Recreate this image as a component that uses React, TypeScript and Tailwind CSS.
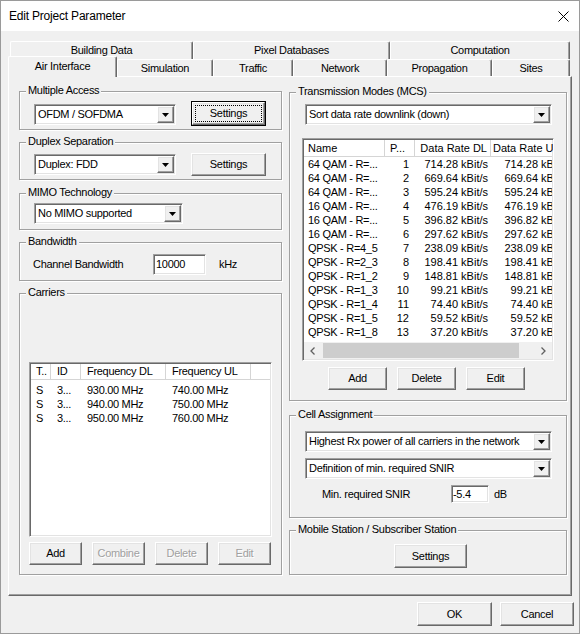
import type { ReactNode } from "react";

const sunken =
  "border border-t-[#a0a0a0] border-l-[#a0a0a0] border-r-white border-b-white shadow-[inset_1px_1px_0_#696969,inset_-1px_-1px_0_#e3e3e3] bg-white p-px";
const raised =
  "border border-t-white border-l-white border-r-[#696969] border-b-[#696969] shadow-[inset_-1px_-1px_0_#a0a0a0,inset_1px_1px_0_#e3e3e3] bg-[#f0f0f0]";

function Arrow() {
  return (
    <svg width="7" height="4" viewBox="0 0 7 4">
      <path d="M0 0h7L3.5 4z" fill="#000" />
    </svg>
  );
}

function Combo({ value, className }: { value: string; className: string }) {
  return (
    <div className={`${sunken} flex items-stretch ${className}`}>
      <span className="flex flex-1 items-center overflow-hidden whitespace-nowrap pl-[2px]">{value}</span>
      <span className={`${raised} flex w-[17px] items-center justify-center`}>
        <Arrow />
      </span>
    </div>
  );
}

function Button({
  children,
  className,
  disabled,
  focused,
}: {
  children: ReactNode;
  className: string;
  disabled?: boolean;
  focused?: boolean;
}) {
  const text = disabled ? "text-[#a0a0a0] [text-shadow:1px_1px_0_#fff]" : "text-black";
  if (focused) {
    return (
      <div className={`flex border border-black ${className}`}>
        <div className={`${raised} flex flex-1 p-[2px]`}>
          <div className={`flex flex-1 items-center justify-center border border-dotted border-black ${text}`}>
            {children}
          </div>
        </div>
      </div>
    );
  }
  return <div className={`${raised} flex items-center justify-center ${text} ${className}`}>{children}</div>;
}

function Group({ title, className, children }: { title: string; className: string; children?: ReactNode }) {
  return (
    <div className={`relative border border-[#a0a0a0] shadow-[inset_1px_1px_0_#fff,1px_1px_0_#fff] ${className}`}>
      <span className="absolute -top-[8px] left-[6px] bg-[#f0f0f0] px-[2px] leading-[13px] whitespace-nowrap">
        {title}
      </span>
      {children}
    </div>
  );
}

const tab =
  "flex items-center justify-center border-t border-l border-r border-t-white border-l-white border-r-[#696969] shadow-[inset_-1px_0_0_#a0a0a0] rounded-t-[2px]";

const mcs: [string, number, string][] = [
  ["64 QAM - R=...", 1, "714.28"],
  ["64 QAM - R=...", 2, "669.64"],
  ["64 QAM - R=...", 3, "595.24"],
  ["16 QAM - R=...", 4, "476.19"],
  ["16 QAM - R=...", 5, "396.82"],
  ["16 QAM - R=...", 6, "297.62"],
  ["QPSK - R=4_5", 7, "238.09"],
  ["QPSK - R=2_3", 8, "198.41"],
  ["QPSK - R=1_2", 9, "148.81"],
  ["QPSK - R=1_3", 10, "99.21"],
  ["QPSK - R=1_4", 11, "74.40"],
  ["QPSK - R=1_5", 12, "59.52"],
  ["QPSK - R=1_8", 13, "37.20"],
];

const carriers = [
  ["930.00 MHz", "740.00 MHz"],
  ["940.00 MHz", "750.00 MHz"],
  ["950.00 MHz", "760.00 MHz"],
];

const head = "flex h-full items-center border-r border-[#d5d5d5] whitespace-nowrap overflow-hidden";

export default function App() {
  return (
    <div className="flex h-[634px] w-[580px] flex-col border border-[#9a9a9a] bg-[#f0f0f0] font-['Liberation_Sans',Arial,sans-serif] text-[11px] leading-[13px] tracking-[-0.3px] text-black">
      {/* title bar */}
      <div className="flex h-[30px] items-center justify-between bg-white pl-[8px] pr-[10px]">
        <span className="text-[12px] tracking-[-0.2px]">Edit Project Parameter</span>
        <svg width="11" height="11" viewBox="0 0 11 11">
          <path d="M0.5 0.5l10 10M10.5 0.5l-10 10" stroke="#000" strokeWidth="1" />
        </svg>
      </div>

      <div className="pt-[10px]">
        {/* tabs, back row */}
        <div className="ml-[9px] flex h-[18px]">
          <div className={`${tab} w-[183px]`}>Building Data</div>
          <div className={`${tab} w-[197px]`}>Pixel Databases</div>
          <div className={`${tab} w-[180px]`}>Computation</div>
        </div>
        {/* tabs, front row */}
        <div className="ml-[7px] flex h-[17px] items-end">
          <div className="relative z-10 -mb-px flex h-[21px] w-[109px] items-start justify-center rounded-t-[2px] border-t border-r border-l border-t-white border-r-[#696969] border-l-white bg-[#f0f0f0] pt-[3px] shadow-[inset_-1px_0_0_#a0a0a0]">
            Air Interface
          </div>
          <div className={`${tab} h-full w-[96px]`}>Simulation</div>
          <div className={`${tab} h-full w-[80px]`}>Traffic</div>
          <div className={`${tab} h-full w-[94px]`}>Network</div>
          <div className={`${tab} h-full w-[105px]`}>Propagation</div>
          <div className={`${tab} h-full w-[78px]`}>Sites</div>
        </div>

        {/* panel */}
        <div className="ml-[7px] flex h-[520px] w-[564px] gap-[7px] border border-t-white border-r-[#696969] border-b-[#696969] border-l-white pt-[14px] pl-[10px] shadow-[inset_-1px_-1px_0_#a0a0a0]">
          {/* left column */}
          <div className="flex w-[263px] flex-col">
            <Group title="Multiple Access" className="flex h-[39px] items-start">
              <Combo value="OFDM / SOFDMA" className="mt-[12px] ml-[14px] h-[21px] w-[142px]" />
              <Button focused className="mt-[9px] ml-[15px] h-[25px] w-[75px]">
                Settings
              </Button>
            </Group>
            <Group title="Duplex Separation" className="mt-[12px] flex h-[38px] items-start">
              <Combo value="Duplex: FDD" className="mt-[11px] ml-[14px] h-[21px] w-[142px]" />
              <Button className="mt-[10px] ml-[15px] h-[23px] w-[75px]">Settings</Button>
            </Group>
            <Group title="MIMO Technology" className="mt-[13px] flex h-[37px] items-start">
              <Combo value="No MIMO supported" className="mt-[9px] ml-[14px] h-[21px] w-[149px]" />
            </Group>
            <Group title="Bandwidth" className="mt-[12px] h-[39px]">
              <div className="mt-[11px] flex h-[21px] items-center">
                <span className="ml-[13px] w-[120px]">Channel Bandwidth</span>
                <div className={`${sunken} flex h-[21px] w-[53px] items-center pl-[2px]`}>10000</div>
                <span className="ml-[13px]">kHz</span>
              </div>
            </Group>
            <Group title="Carriers" className="mt-[12px] h-[282px]">
              <div className={`${sunken} mt-[68px] ml-[9px] flex h-[175px] w-[243px] flex-col`}>
                <div className="flex h-[16px] shrink-0 border-b border-[#d5d5d5]">
                  <div className={`${head} w-[20px] pl-[5px]`}>T..</div>
                  <div className={`${head} w-[30px] pl-[6px]`}>ID</div>
                  <div className={`${head} w-[85px] pl-[6px]`}>Frequency DL</div>
                  <div className={`${head} w-[85px] pl-[6px]`}>Frequency UL</div>
                </div>
                <div className="pt-[3px]">
                  {carriers.map(([dl, ul]) => (
                    <div key={dl} className="flex h-[14px] items-center whitespace-nowrap">
                      <span className="w-[20px] pl-[5px]">S</span>
                      <span className="w-[30px] pl-[6px]">3...</span>
                      <span className="w-[85px] pl-[6px]">{dl}</span>
                      <span className="w-[85px] pl-[6px]">{ul}</span>
                    </div>
                  ))}
                </div>
              </div>
              <div className="mt-[5px] ml-[9px] flex gap-[10px]">
                <Button className="h-[23px] w-[53px]">Add</Button>
                <Button disabled className="h-[23px] w-[53px]">
                  Combine
                </Button>
                <Button disabled className="h-[23px] w-[53px]">
                  Delete
                </Button>
                <Button disabled className="h-[23px] w-[53px]">
                  Edit
                </Button>
              </div>
            </Group>
          </div>

          {/* right column */}
          <div className="mt-px flex w-[278px] flex-col">
            <Group title="Transmission Modes (MCS)" className="h-[309px]">
              <Combo value="Sort data rate downlink (down)" className="mt-[11px] ml-[15px] h-[21px] w-[247px]" />
              <div
                className={`${sunken} mt-[13px] ml-[12px] flex h-[223px] w-[252px] flex-col overflow-hidden tracking-normal`}
              >
                <div className="flex h-[17px] shrink-0 border-b border-[#d5d5d5]">
                  <div className={`${head} w-[81px] shrink-0 pl-[4px]`}>Name</div>
                  <div className={`${head} w-[30px] shrink-0 pl-[5px]`}>P...</div>
                  <div className={`${head} w-[76px] shrink-0 justify-end pr-[3px]`}>Data Rate DL</div>
                  <div className={`${head} w-[80px] shrink-0 pl-[2px]`}>Data Rate UL</div>
                </div>
                <div className="flex-1 overflow-hidden">
                  {mcs.map(([name, p, rate]) => (
                    <div key={p} className="flex h-[14px] items-center whitespace-nowrap">
                      <span className="w-[81px] shrink-0 overflow-hidden pl-[4px] tracking-[-0.3px]">{name}</span>
                      <span className="w-[30px] shrink-0 pr-[6px] text-right">{p}</span>
                      <span className="w-[76px] shrink-0 pr-[3px] text-right">{rate} kBit/s</span>
                      <span className="w-[80px] shrink-0 pr-[3px] text-right">{rate} kBit/s</span>
                    </div>
                  ))}
                </div>
                <div className="flex h-[17px] shrink-0 items-stretch bg-[#f0f0f0]">
                  <span className="flex w-[17px] items-center justify-center">
                    <svg width="5" height="8" viewBox="0 0 5 8">
                      <path d="M4.5 0.5L1 4l3.5 3.5" fill="none" stroke="#606060" strokeWidth="1.3" />
                    </svg>
                  </span>
                  <span className="my-px ml-[2px] w-[196px] bg-[#cdcdcd]" />
                  <span className="flex-1" />
                  <span className="flex w-[17px] items-center justify-center">
                    <svg width="5" height="8" viewBox="0 0 5 8">
                      <path d="M0.5 0.5L4 4L0.5 7.5" fill="none" stroke="#606060" strokeWidth="1.3" />
                    </svg>
                  </span>
                </div>
              </div>
              <div className="mt-[6px] ml-[38px] flex gap-[10px]">
                <Button className="h-[23px] w-[59px]">Add</Button>
                <Button className="h-[23px] w-[59px]">Delete</Button>
                <Button className="h-[23px] w-[59px]">Edit</Button>
              </div>
            </Group>
            <Group title="Cell Assignment" className="mt-[14px] h-[103px]">
              <Combo
                value="Highest Rx power of all carriers in the network"
                className="mt-[15px] ml-[15px] h-[21px] w-[247px]"
              />
              <Combo value="Definition of min. required SNIR" className="mt-[6px] ml-[15px] h-[21px] w-[247px]" />
              <div className="mt-[6px] flex h-[18px] items-center">
                <span className="ml-[32px] w-[129px]">Min. required SNIR</span>
                <div className={`${sunken} flex h-[18px] w-[38px] items-center pl-[1px]`}>-5.4</div>
                <span className="ml-[5px]">dB</span>
              </div>
            </Group>
            <Group title="Mobile Station / Subscriber Station" className="mt-[12px] h-[45px]">
              <Button className="mt-[13px] ml-[104px] h-[24px] w-[73px]">Settings</Button>
            </Group>
          </div>
        </div>

        {/* dialog buttons */}
        <div className="mt-[6px] flex justify-end gap-[8px] pr-[5px]">
          <Button className="h-[24px] w-[75px]">OK</Button>
          <Button className="h-[24px] w-[74px]">Cancel</Button>
        </div>
      </div>
    </div>
  );
}
